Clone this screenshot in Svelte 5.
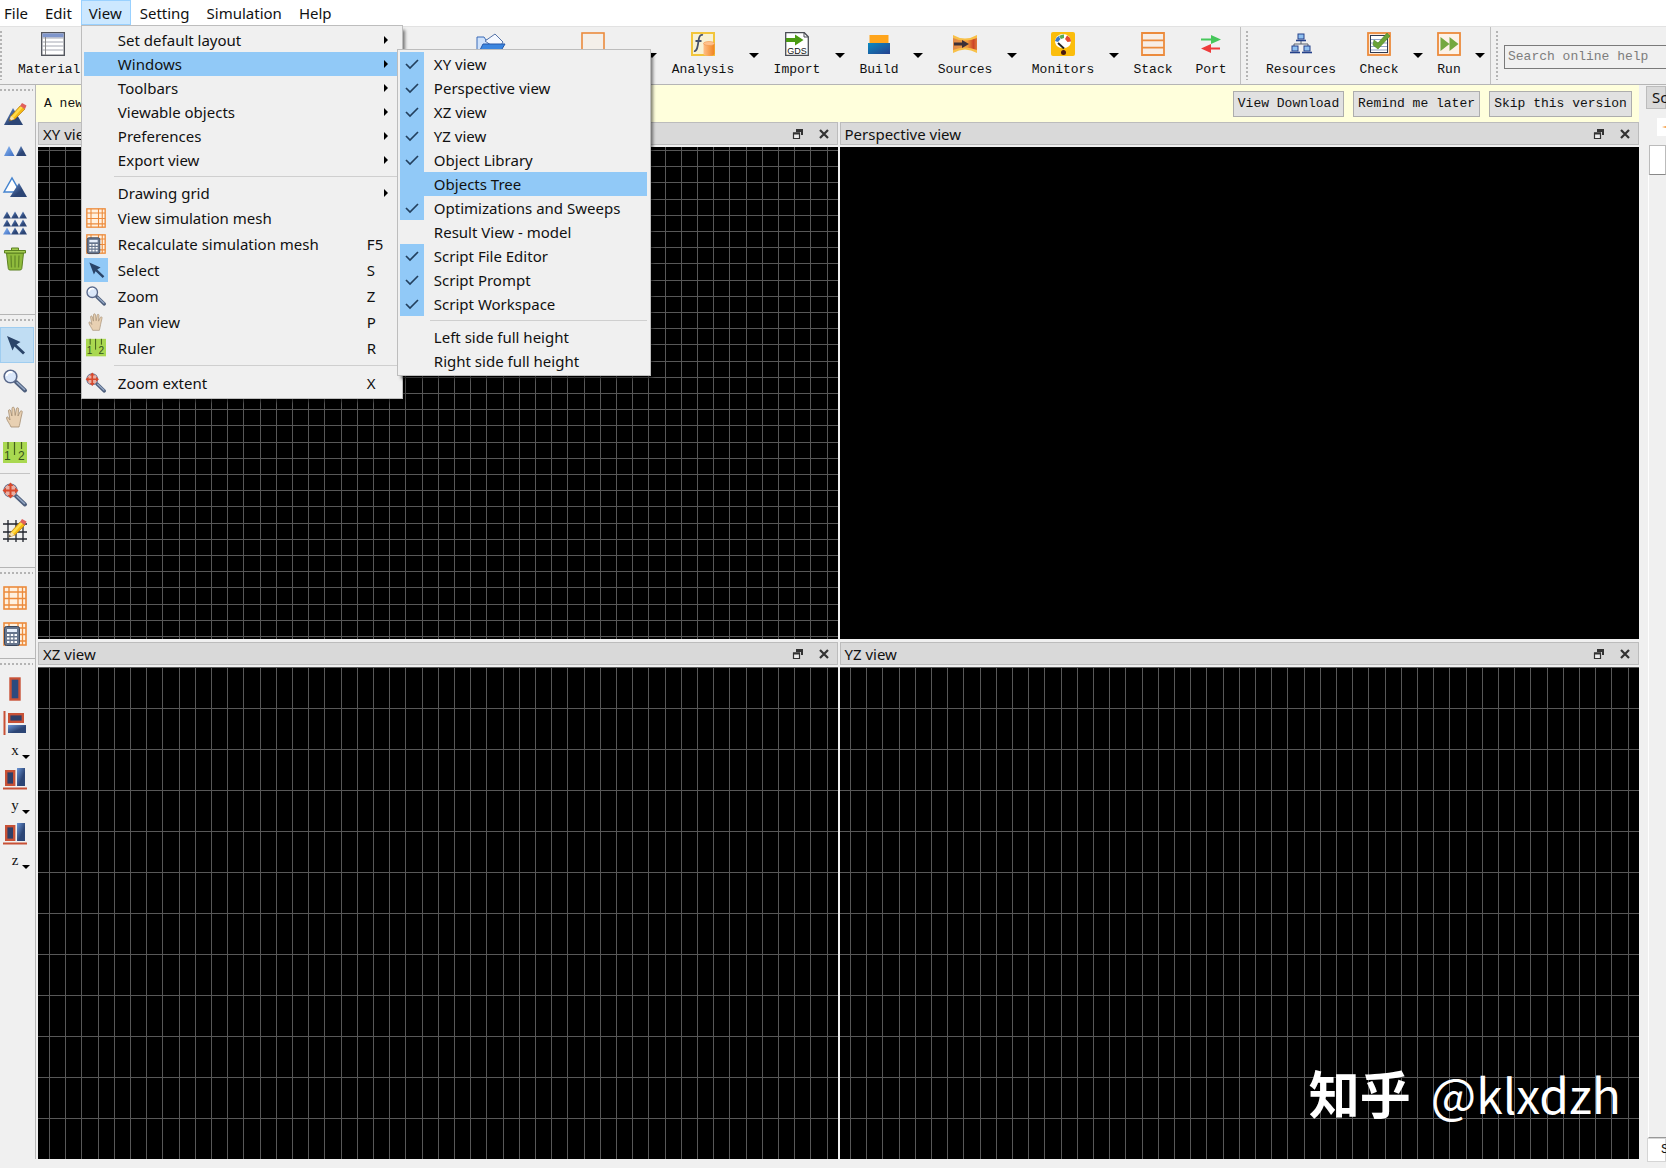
<script>
  const toolsA = [
    { label: 'Components', icon: 'open' },
    { label: 'Structures', icon: 'structure', drop: true },
    { label: 'Analysis', icon: 'analysis', drop: true },
    { label: 'Import', icon: 'gds', drop: true },
    { label: 'Build', icon: 'build', drop: true },
    { label: 'Sources', icon: 'sources', drop: true },
    { label: 'Monitors', icon: 'monitors', drop: true },
    { label: 'Stack', icon: 'stack' },
    { label: 'Port', icon: 'port' }
  ];
  const toolsB = [
    { label: 'Resources', icon: 'resources' },
    { label: 'Check', icon: 'check', drop: true },
    { label: 'Run', icon: 'run', drop: true }
  ];
  const noticeButtons = ['View Download', 'Remind me later', 'Skip this version'];
  const viewMenu = [
    { label: 'Set default layout', sub: true },
    { label: 'Windows', sub: true, open: true },
    { label: 'Toolbars', sub: true },
    { label: 'Viewable objects', sub: true },
    { label: 'Preferences', sub: true },
    { label: 'Export view', sub: true },
    null,
    { label: 'Drawing grid', sub: true },
    { label: 'View simulation mesh', icon: 'mesh' },
    { label: 'Recalculate simulation mesh', icon: 'recalc', key: 'F5' },
    { label: 'Select', icon: 'arrow', key: 'S', on: true },
    { label: 'Zoom', icon: 'zoom', key: 'Z' },
    { label: 'Pan view', icon: 'hand', key: 'P' },
    { label: 'Ruler', icon: 'ruler', key: 'R' },
    null,
    { label: 'Zoom extent', icon: 'extent', key: 'X' }
  ];
  const windowsMenu = [
    { label: 'XY view', checked: true },
    { label: 'Perspective view', checked: true },
    { label: 'XZ view', checked: true },
    { label: 'YZ view', checked: true },
    { label: 'Object Library', checked: true },
    { label: 'Objects Tree', hover: true },
    { label: 'Optimizations and Sweeps', checked: true },
    { label: 'Result View - model' },
    { label: 'Script File Editor', checked: true },
    { label: 'Script Prompt', checked: true },
    { label: 'Script Workspace', checked: true },
    null,
    { label: 'Left side full height' },
    { label: 'Right side full height' }
  ];
  const sideGroups = [
    { name: 'edit', items: [['edit', 'Edit object'], ['duplicate', 'Duplicate'], ['copy', 'Copy'], ['array', 'Array'], ['trash', 'Delete']] },
    { name: 'mouse', items: [['arrow', 'Select'], ['zoom', 'Zoom'], ['hand', 'Pan'], ['ruler', 'Ruler'], null, ['extent', 'Zoom extent'], ['gridedit', 'Edit grid']] },
    { name: 'mesh', items: [['mesh', 'View mesh'], ['recalc', 'Recalculate mesh']] },
    { name: 'align', items: [['bar', 'Align'], ['alignx', 'Align x', 'x'], ['aligny', 'Align y', 'y'], ['aligny', 'Align z', 'z']] }
  ];
  const views = [
    { title: 'XY view', x: 11, y: 3, rows: [0, 16, 32, 49, 65], height: 81 },
    { title: 'Perspective view' },
    { title: 'XZ view', x: 11, y: 0, rows: [0], height: 41 },
    { title: 'YZ view', x: 10, y: 0, rows: [0], height: 41 }
  ];
  const columns = [0, 16, 32, 49, 65];
  const tri = [0, 8, 16];
</script>

{#snippet pencil()}
  <path d="M6 18l2-5 9-10 5 3-10 10z" fill="#f5b912" stroke="#b87b10" stroke-width=".7" />
  <path d="M8 14L18 3l2 1.200L9.500 16z" fill="#ffdc4a" />
  <path d="M17 3l2-3 4.500 2.500L22 6z" fill="#e0605c" />
  <path d="M6 18l2-5 3.500 3z" fill="#f6e0b0" />
  <path d="M6 18l.7-2 1.300 1.200z" fill="#222" />
{/snippet}

{#snippet gridLines()}
  <rect x="1" y="1" width="22" height="22" fill="#fff1e0" stroke="#ec8b3c" stroke-width="1.600" />
  <path d="M6 1v22M15 1v22M19.500 1v22M1 6h22M1 12.500h22M1 19h22" stroke="#ec8b3c" stroke-width="1.300" />
{/snippet}

{#snippet glass()}
  <path d="M13 13l9 8.500" stroke="#4d5e7c" stroke-width="4" stroke-linecap="round" />
  <path d="M14 13.500l7.500 7" stroke="#94a7c4" stroke-width="1.600" stroke-linecap="round" />
  <circle cx="7.500" cy="7.500" r="6.300" fill="#dbe8fa" stroke="#59688a" stroke-width="1.600" />
  <path d="M3.500 7a4 4 0 0 1 6-3.400" stroke="#fff" stroke-width="2" fill="none" />
{/snippet}

{#snippet icon(name)}
  <svg class="icon" viewBox="0 0 24 24" fill="none" aria-hidden="true">
    <defs>
      <linearGradient id="navy" x1="0" y1="0" x2="1" y2="1"><stop offset="0" stop-color="#6c97d8" /><stop offset=".6" stop-color="#2c4575" /></linearGradient>
      <linearGradient id="sky" x1="0" y1="0" x2="1" y2="1"><stop offset="0" stop-color="#8fbcf5" /><stop offset="1" stop-color="#3c6cc0" /></linearGradient>
      <linearGradient id="amber" x1="0" y1="0" x2="1" y2="0"><stop offset="0" stop-color="#ffbf88" /><stop offset="1" stop-color="#f0831e" /></linearGradient>
      <linearGradient id="book" x1="0" y1="0" x2="1" y2="1"><stop offset="0" stop-color="#0a8ac0" /><stop offset="1" stop-color="#26418f" /></linearGradient>
      <linearGradient id="beam" x1="0" y1="0" x2="1" y2="0"><stop offset="0" stop-color="#e08a4c" /><stop offset=".6" stop-color="#ee9a3c" /><stop offset=".85" stop-color="#cc4428" /><stop offset="1" stop-color="#e07a3c" /></linearGradient>
    </defs>
    {#if name === 'materials'}
      <rect x=".7" y=".7" width="22.600" height="22.600" fill="#fff" stroke="#53565e" stroke-width="1.400" />
      <path d="M1.400 1.400h21.200v4H1.400z" fill="#7f96cc" />
      <path d="M1.400 6h21M1.400 10h21M1.400 14h21M1.400 18h21" stroke="#a4a7b2" />
      <path d="M4.500 5v18" stroke="#888" />
    {:else if name === 'open'}
      <path d="M-2 22V5h7l2 3h11v14z" fill="#cfe2fb" stroke="#3a6bb8" />
      <path d="M6 9l10-7 8 8-5 8z" fill="#f4f8ff" stroke="#5573a8" />
      <path d="M-1 22l5-10h22l-6 10z" fill="#3b86e0" stroke="#2457a8" />
    {:else if name === 'structure'}
      <rect x="1" y="1" width="22" height="22" fill="#f4efe9" stroke="#ec8b3c" stroke-width="1.600" />
    {:else if name === 'analysis'}
      <rect x="1" y="1" width="22" height="22" fill="#f7f1d5" stroke="#f2c53b" stroke-width="2" />
      <path d="M12 3c-3-1-4 2-4.500 6S6 20 3 19M4.500 9h6" stroke="#47526b" stroke-width="1.800" />
      <path d="M12.500 12v10c0 2.600 11 2.600 11 0V12z" fill="url(#amber)" />
      <ellipse cx="18" cy="11.500" rx="5.500" ry="2" fill="#ffc18c" stroke="#f09548" stroke-width=".6" />
    {:else if name === 'gds'}
      <path d="M.7.7h18.600l4 4v18.600H.7z" fill="#fff" stroke="#4a4d55" stroke-width="1.300" />
      <path d="M19 .7v4.300h4" stroke="#4a4d55" />
      <path d="M1 6h9V2.500L18.500 8 10 13.500V10H1z" fill="#4a9a12" />
      <text x="12" y="22" font-family="Liberation Sans, sans-serif" font-size="9" text-anchor="middle" fill="#111">GDS</text>
    {:else if name === 'build'}
      <path d="M2.500 3h19v9h-19z" fill="#ffa51c" /><path d="M1 11h22v11H1z" fill="url(#book)" />
    {:else if name === 'sources'}
      <path d="M0 3q12 7 24 0v18q-12-7-24 0z" fill="#f8c048" />
      <path d="M0 6q12 5 24 0v12q-12-5-24 0z" fill="url(#beam)" />
      <path d="M1 10.500h8V8l7 4-7 4v-2.500H1z" fill="#3c3038" />
    {:else if name === 'monitors'}
      <rect width="24" height="24" rx="2" fill="#fbbd0c" />
      <path d="M4 10a8 8 0 0 1 16 0q-1 6-8 6T4 10z" fill="#fff" />
      <path d="M4 9a8 8 0 0 1 3.500-5l2 3L7 10z" fill="#3a78c8" /><path d="M8 4q3-2 5-1.500V6l-3 1z" fill="#5aaa54" /><path d="M16 3.500q4 2 4 6l-3.500.5L14 7z" fill="#e24a32" />
      <path d="M7 11l6 5.500" stroke="#222" stroke-width="1.800" /><circle cx="12.500" cy="20.500" r="2.500" fill="#4a1a10" />
    {:else if name === 'stack'}
      <path d="M1 1h22v22H1zM1 8.300h22M1 15.700h22" fill="#f7eee6" stroke="#ec8b3c" stroke-width="1.800" />
    {:else if name === 'port'}
      <path d="M2 6.500h10V3l10 4.500-10 4.500V8.500H2z" fill="#46c75a" /><path d="M21 15.500H12V12l-10 4.500 10 4.500v-3.500h9z" fill="#ee3b3b" />
    {:else if name === 'resources'}
      <path d="M12 8v4M5 16v-4h14v4" stroke="#56606e" />
      {#each [[8, 2], [2, 14], [14, 14]] as [x, y]}
        <rect x={x + 1} {y} width="6" height="5" fill="#8fc0f0" stroke="#24418a" /><path d="M{x - 1} {y + 6.500}h10" stroke="#24418a" stroke-width="1.600" />
      {/each}
    {:else if name === 'check'}
      <rect x="1" y="1" width="22" height="22" fill="#fbe8d8" stroke="#ec8b3c" stroke-width="1.800" />
      <rect x="3.500" y="3.500" width="17" height="17" fill="#fff" stroke="#303a50" /><path d="M4 7.500h16M4 11h16M4 14.500h16M4 18h16" stroke="#8fa3c8" />
      <path d="M7 8l4 3L20 1l3 3-12 13-5-4z" fill="#69a336" stroke="#4c8020" stroke-width=".6" />
    {:else if name === 'run'}
      <rect x="1" y="1" width="22" height="22" fill="#fdf2e8" stroke="#ec8b3c" stroke-width="1.800" />
      <path d="M3.500 5l9 7-9 7zM12.500 5l9 7-9 7z" fill="#74a840" />
    {:else if name === 'mesh'}
      {@render gridLines()}
    {:else if name === 'recalc'}
      {@render gridLines()}
      <rect x="1.500" y="4.500" width="15" height="19" rx="2" fill="#66758d" stroke="#39465c" />
      <path d="M4 7h10v3H4z" fill="#e6eefa" />
      <path d="M4 13h10M4 16.500h10M4 20h10" stroke="#fff" stroke-width="2" stroke-dasharray="2.500 1.250" />
    {:else if name === 'arrow'}
      <path d="M4 3l13.500 6-4 2.500 8.500 8-2 2-8.500-8-2 4z" fill="#2a4468" />
    {:else if name === 'zoom'}
      {@render glass()}
    {:else if name === 'extent'}
      {@render glass()}
      <circle cx="7.500" cy="7.500" r="6.300" fill="#e9b0a4" />
      <path d="M7.500-.5l3 3.500h-2v3.500h3.500v-2L15.500 7.500 12 10.500v-2H8.500V12h2l-3 3.500-3-3.500h2V8.500H3v2L-.5 7.500 3 4.500v2h3.500V3h-2z" fill="#d8492c" />
    {:else if name === 'hand'}
      <path d="M8 22c-1-3-4-6-4.500-9 0-1.500 1.500-1.500 2 0l1.500 2L5.500 6c0-1.800 1.800-1.800 2.200 0l1.200 5L9 3.500c0-1.800 2.200-1.800 2.400 0l.8 7 1.200-6.700c.3-1.600 2.300-1.300 2.200.4L15 11l2.200-4.500c.8-1.400 2.400-.6 2 1L17.500 15c-.4 3-1 5-1.500 7z" fill="#e8d0b2" stroke="#a58e72" stroke-width=".8" />
    {:else if name === 'ruler'}
      <path d="M0 1h24v21H0z" fill="#a9d850" />
      <path d="M5 1v7M11.500 1v13M18.500 1v7" stroke="#44601c" stroke-width="1.200" />
      <text x="1" y="19" font-family="Liberation Sans, sans-serif" font-size="12" fill="#34501c">1</text><text x="15" y="19" font-family="Liberation Sans, sans-serif" font-size="12" fill="#34501c">2</text>
    {:else if name === 'edit'}
      <path d="M1 22L10 5l10 17z" fill="url(#navy)" />{@render pencil()}
    {:else if name === 'duplicate'}
      <path d="M1 17L6 7l5.500 10z" fill="url(#sky)" /><path d="M13 17l5-10 5.500 10z" fill="url(#navy)" />
    {:else if name === 'copy'}
      <path d="M1 17L9 3l8 14z" fill="#fff" stroke="#4584cf" stroke-width="1.500" /><path d="M7 22l9-14 8 14z" fill="url(#navy)" />
    {:else if name === 'array'}
      {#each tri as y}{#each tri as x}
        <path d="M{x} {y + 7.500}l4-7 4 7z" fill={x === 0 && y === 16 ? 'url(#sky)' : 'url(#navy)'} />
      {/each}{/each}
    {:else if name === 'trash'}
      <path d="M3.500 6h17l-1.700 15.500q-.2 1.500-2 1.500H7q-1.500 0-1.700-1.500z" fill="#8fbb3c" stroke="#5b8020" />
      <path d="M8 8.500l.5 12M12 8.500v12M16 8.500l-.5 12" stroke="#648a28" stroke-width="1.300" />
      <path d="M1.500 3.500h21V6h-21zM8.500 3.500V1h7v2.500" fill="#a3cc50" stroke="#5b8020" />
    {:else if name === 'gridedit'}
      <path d="M5 1v22M13 1v22M20 1v22M0 5h24M0 13h24M0 20h24" stroke="#20242c" stroke-width="1.300" />{@render pencil()}
    {:else if name === 'bar'}
      <rect x="7.500" y="1.500" width="9" height="21" fill="#2c4a7e" stroke="#c85136" stroke-width="2.400" />
    {:else if name === 'alignx'}
      <path d="M1.500 0v24" stroke="#c85136" stroke-width="2" /><rect x="6.200" y="3.200" width="13.600" height="7.600" fill="#2f3f68" stroke="#c85136" stroke-width="2.400" />
      <path d="M5 14h18v8H5z" fill="url(#navy)" />
    {:else if name === 'aligny'}
      <path d="M0 22.500h24" stroke="#c85136" stroke-width="2" /><rect x="3.200" y="5.200" width="8" height="13.600" fill="#2f3f68" stroke="#c85136" stroke-width="2.400" />
      <path d="M14 2h8v18h-8z" fill="url(#navy)" />
    {/if}
  </svg>
{/snippet}

{#snippet tool(t)}
  <button class="tool" style:width={`${t.label.length * 8 + 22}px`}>
    {@render icon(t.icon)}<span>{t.label}</span>
  </button>
  {#if t.drop}<button class="drop" aria-label={`${t.label} options`}><i class="down"></i></button>{/if}
{/snippet}

<div class="app">
  <nav class="menubar">
    <button>File</button>
    <button>Edit</button>
    <div class="anchor">
      <button class="active">View</button>
      <div class="popup view-menu">
        {#each viewMenu as m}
          {#if m}
            <div class="anchor">
              <button class="row" class:tall={m.icon} class:hot={m.open}>
                <span class="mark" class:hot={m.on}>{#if m.icon}{@render icon(m.icon)}{/if}</span>
                <span class="name">{m.label}</span>
                {#if m.key}<span class="key">{m.key}</span>{/if}
                {#if m.sub}<i class="right"></i>{/if}
              </button>
              {#if m.open}
                <div class="popup sub-menu">
                  {#each windowsMenu as w}
                    {#if w}
                      <button class="row" class:hot={w.hover}>
                        <span class="mark" class:hot={w.checked || w.hover}>
                          {#if w.checked}<svg class="tick" viewBox="0 0 14 12" aria-hidden="true"><path d="M1 6l4 4 8-8" fill="none" stroke="#23405e" stroke-width="1.700" /></svg>{/if}
                        </span>
                        <span class="name">{w.label}</span>
                      </button>
                    {:else}<hr />{/if}
                  {/each}
                </div>
              {/if}
            </div>
          {:else}<hr />{/if}
        {/each}
      </div>
    </div>
    <button>Setting</button>
    <button>Simulation</button>
    <button>Help</button>
  </nav>

  <header class="toolbar">
    <i class="grip"></i>
    <div class="tools first">{@render tool({ label: 'Materials', icon: 'materials' })}</div>
    <div class="tools">{#each toolsA as t}{@render tool(t)}{/each}</div>
    <i class="rule"></i><i class="grip"></i>
    <div class="tools">{#each toolsB as t}{@render tool(t)}{/each}</div>
    <i class="rule"></i><i class="grip"></i>
    <input type="text" placeholder="Search online help" aria-label="Search online help" />
  </header>

  <div class="body">
    <aside class="side">
      {#each sideGroups as g}
        <div class="group {g.name}">
          <i class="hgrip"></i>
          {#each g.items as it, i}
            {#if it}
              <button class:labelled={it[2]} class:selected={g.name === 'mouse' && i === 0} aria-label={it[1]}>
                {@render icon(it[0])}
                {#if it[2]}<span>{it[2]}</span><i class="down"></i>{/if}
              </button>
            {:else}<hr />{/if}
          {/each}
        </div>
      {/each}
    </aside>

    <main>
      <div class="notice">
        <span>A new version is available</span>
        {#each noticeButtons as b}<button style:width={`${b.length * 8 + 7}px`}>{b}</button>{/each}
      </div>
      <div class="views">
        {#each views as v, i}
          <section>
            <div class="title">
              <h2>{v.title}</h2>
              <button aria-label="Float"><svg viewBox="0 0 12 12"><path d="M4 1h7v6H9V4H4z" fill="#333" /><path d="M1.500 5h6v5.500h-6z" fill="#eee" stroke="#333" stroke-width="1.200" /><path d="M1 4.500h7v2H1z" fill="#333" /></svg></button>
              <button aria-label="Close"><svg viewBox="0 0 12 12"><path d="M2 2l8 8M10 2l-8 8" stroke="#333" stroke-width="2.200" /></svg></button>
            </div>
            <div class="canvas">
              {#if v.rows}
                <svg width="100%" height="100%" shape-rendering="crispEdges" aria-hidden="true">
                  <defs>
                    <pattern id={`cols${i}`} x={v.x} y="0" width="81" height="81" patternUnits="userSpaceOnUse">
                      {#each columns as c}<rect x={c} y="0" width="1" height="81" fill="#585858" />{/each}
                    </pattern>
                    <pattern id={`rows${i}`} x="0" y={v.y} width="81" height={v.height} patternUnits="userSpaceOnUse">
                      {#each v.rows as r}<rect x="0" y={r} width="81" height="1" fill="#585858" />{/each}
                    </pattern>
                  </defs>
                  <rect width="100%" height="100%" fill={`url(#cols${i})`} />
                  <rect width="100%" height="100%" fill={`url(#rows${i})`} />
                </svg>
              {/if}
            </div>
          </section>
        {/each}
      </div>
    </main>

    <aside class="dock">
      <h2>Script File Editor</h2>
      <button class="new" aria-label="New script"><svg viewBox="0 0 18 18"><path d="M0 0h18v18H0z" fill="#fff" /><path d="M10 5l1 3 4 1-4 1-1 3-1-3-4-1 4-1z" fill="#f5a04a" /></svg></button>
      <div class="line"></div>
      <div class="area"></div>
      <button class="tab">Script</button>
    </aside>
  </div>
  <div class="watermark"><b>知乎</b><span>@klxdzh</span></div>
</div>

<style>
  :global(body) { background: #f0f0f0; overflow: hidden; }
  * { box-sizing: border-box; }
  .app {
    position: relative;
    display: flex;
    flex-direction: column;
    height: 100vh;
    overflow: hidden;
    color: #111;
    font: 15px/20px 'Noto Sans', 'Open Sans', sans-serif;
  }
  button { margin: 0; padding: 0; border: 0; background: none; font: inherit; color: inherit; }
  h2 { margin: 0; font: inherit; white-space: nowrap; }
  svg { display: block; }
  .icon { width: 24px; height: 24px; overflow: visible; flex: none; }

  .menubar { display: flex; height: 26px; padding-left: 4px; gap: 17px; background: #fff; }
  .menubar > button, .active { height: 25px; }
  .active { margin: 0 -8px; padding: 0 9px 0 8px; background: #cce8ff; box-shadow: inset 0 0 0 1px #99d1ff; }
  .anchor { position: relative; }
  .popup {
    position: absolute;
    z-index: 5;
    padding: 2px;
    border: 1px solid #bdbdbd;
    background: #f0f0f0;
    box-shadow: 3px 4px 3px -1px rgba(0, 0, 0, .5);
  }
  .view-menu { top: 25px; left: -8px; width: 322px; }
  .sub-menu { top: -3px; left: 313px; width: 254px; padding-right: 3px; }
  .row { display: flex; align-items: center; width: 100%; height: 24px; text-align: left; white-space: nowrap; }
  .view-menu .anchor > .row { width: 313px; }
  .row.tall { height: 26px; }
  .mark { display: grid; place-items: center; flex: none; width: 24px; height: 24px; margin-right: 10px; }
  .mark .icon { width: 20px; height: 20px; }
  .hot { background: #91c9f7; }
  .tick { width: 14px; height: 12px; }
  .name { flex: 1; }
  .key { width: 30px; }
  .right { margin-right: 9px; border: 4px solid transparent; border-left-color: #000; border-right: 0; }
  .down { border: 5px solid transparent; border-top-color: #000; border-bottom: 0; }
  .popup hr { height: 1px; margin: 4px 0 4px 30px; border: 0; background: #cfcfcf; }

  .toolbar {
    display: flex;
    align-items: stretch;
    flex: none;
    height: 59px;
    border-top: 1px solid #e2e2e2;
    border-bottom: 1px solid #b5b5b5;
    font: 13px/16px 'Liberation Mono', monospace;
  }
  .tools { display: flex; }
  .first { width: 434px; margin-left: -2px; }
  .tool { display: flex; flex-direction: column; align-items: center; padding-top: 5px; gap: 6px; white-space: nowrap; }
  .drop { display: grid; place-items: center; width: 16px; }
  .grip { width: 2px; margin: 4px 6px 4px 5px; background: repeating-linear-gradient(#b4b4b4 0 2px, transparent 2px 4px); }
  .grip:first-child { margin-left: 0; }
  .rule { width: 1px; margin-left: 2px; background: #c0c0c0; }
  .toolbar input {
    flex: 1;
    align-self: center;
    min-width: 0;
    height: 24px;
    margin: 2px -4px 0 0;
    padding: 0 3px;
    border: 1px solid #7a7a7a;
    background: #f0f0f0;
    font: inherit;
  }
  .toolbar input::placeholder { color: #7d7d7d; opacity: 1; }

  .body { display: flex; flex: 1; min-height: 0; padding-bottom: 9px; }
  .side { flex: none; width: 36px; border-right: 1px solid #b8b8b8; }
  .group { display: flex; flex-direction: column; padding-top: 4px; border-bottom: 1px solid #b5b5b5; }
  .edit { padding-bottom: 37px; }
  .mouse { padding-bottom: 18px; }
  .mesh { padding-bottom: 6px; }
  .align { border: 0; }
  .hgrip { height: 2px; margin: 0 2px 6px 0; background: repeating-linear-gradient(90deg, #b4b4b4 0 2px, transparent 2px 4px); }
  .group button { position: relative; display: grid; place-items: center; width: 34px; height: 36px; padding-right: 4px; }
  .group .labelled { height: 55px; align-content: start; padding-top: 4px; row-gap: 5px; font: 15px/20px 'Liberation Serif', serif; }
  .labelled .down { position: absolute; right: 4px; bottom: 3px; border-width: 4px; border-bottom: 0; }
  .group .selected { background: #c0ddf3; box-shadow: inset 0 0 0 1px #9fcdf0; }
  .group hr { width: 30px; height: 1px; margin: 2px 0 3px; border: 0; background: #c4c4c4; }

  main { display: flex; flex-direction: column; flex: 1; min-width: 0; }
  .notice {
    display: flex;
    align-items: center;
    gap: 9px;
    height: 37px;
    padding: 0 7px 0 8px;
    background: #ffffdc;
    font: 13px/16px 'Liberation Mono', monospace;
  }
  .notice span { flex: 1; }
  .notice button { height: 26px; border: 1px solid #adadad; background: #e1e1e1; white-space: nowrap; }
  .views { display: grid; grid-template: 1fr 1fr / 1fr 1fr; gap: 3px 2px; flex: 1; min-height: 0; padding-left: 2px; }
  section { display: flex; flex-direction: column; gap: 2px; min-width: 0; min-height: 0; }
  .title { display: flex; align-items: center; gap: 14px; height: 23px; padding: 0 7px 0 4px; border: 1px solid #bcbcbc; background: #d9d9d9; }
  .title h2 { flex: 1; }
  .title svg { width: 12px; height: 12px; }
  .canvas { flex: 1; min-height: 0; background: #000; }

  .dock { display: flex; flex-direction: column; flex: none; width: 20px; margin: 0 0 -3px 7px; overflow: hidden; }
  .dock h2 { height: 23px; margin-top: 1px; padding-left: 5px; border: 1px solid #bcbcbc; background: #d9d9d9; }
  .new { width: 18px; margin: 9px 0 9px 11px; }
  .line { height: 30px; margin-left: 3px; border: 1px solid #bbb; border-bottom-color: #888; background: #fff; }
  .area { flex: 1; margin-left: 2px; border-left: 1px solid #fff; border-bottom: 1px solid #999; }
  .tab { height: 24px; margin-left: 1px; padding-left: 13px; border: 1px solid #d5d5d5; background: #fff; font: 13px/16px 'Liberation Mono', monospace; text-align: left; }

  .watermark {
    position: absolute;
    right: 45px;
    bottom: 39px;
    display: flex;
    align-items: baseline;
    gap: 20px;
    color: #fff;
    font: 48px/72px 'Noto Sans CJK SC', sans-serif;
  }
  .watermark b { font-size: 51px; }
</style>
